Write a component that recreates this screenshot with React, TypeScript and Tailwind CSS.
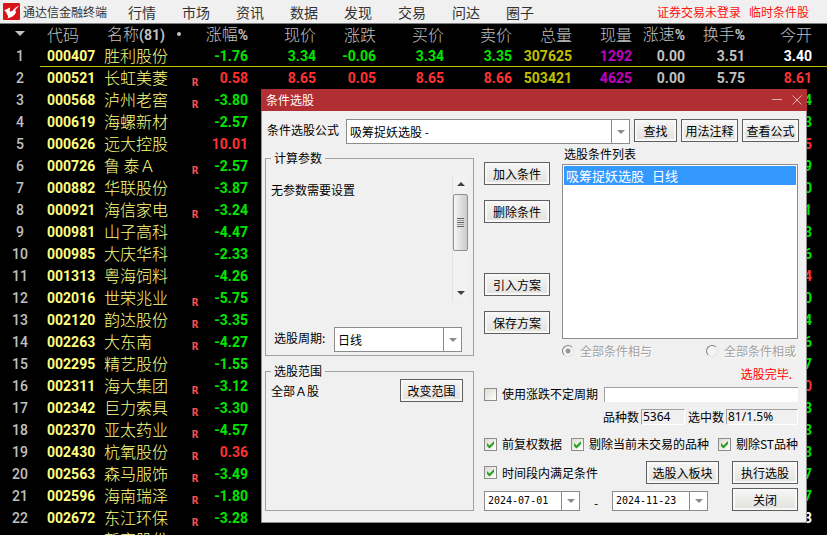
import { useState, type ReactNode } from 'react';
import clsx from 'clsx';

const menus = ['行情', '市场', '资讯', '数据', '发现', '交易', '问达', '圈子'];

type Stock = {
  code: string;
  name: string;
  margin?: boolean;
  change: string;
  quotes?: string[];
  open: string;
  openColor: string;
};

const GREEN = 'text-[#00e600]';
const RED = 'text-[#ff3232]';
const WHITE = 'text-white';

const stocks: Stock[] = [
  { code: '000407', name: '胜利股份', change: '-1.76', quotes: ['3.34', '-0.06', '3.34', '3.35', '307625', '1292', '0.00', '3.51'], open: '3.40', openColor: WHITE },
  { code: '000521', name: '长虹美菱', margin: true, change: '0.58', quotes: ['8.65', '0.05', '8.65', '8.66', '503421', '4625', '0.00', '5.75'], open: '8.61', openColor: RED },
  { code: '000568', name: '泸州老窖', margin: true, change: '-3.80', open: '4', openColor: GREEN },
  { code: '000619', name: '海螺新材', change: '-2.57', open: '3', openColor: GREEN },
  { code: '000626', name: '远大控股', change: '10.01', open: '5', openColor: RED },
  { code: '000726', name: '鲁 泰Ａ', margin: true, change: '-2.57', open: '9', openColor: GREEN },
  { code: '000882', name: '华联股份', change: '-3.87', open: '0', openColor: GREEN },
  { code: '000921', name: '海信家电', margin: true, change: '-3.24', open: '1', openColor: GREEN },
  { code: '000981', name: '山子高科', change: '-4.47', open: '3', openColor: GREEN },
  { code: '000985', name: '大庆华科', change: '-2.33', open: '6', openColor: GREEN },
  { code: '001313', name: '粤海饲料', change: '-4.26', open: '4', openColor: RED },
  { code: '002016', name: '世荣兆业', margin: true, change: '-5.75', open: '0', openColor: GREEN },
  { code: '002120', name: '韵达股份', margin: true, change: '-3.35', open: '4', openColor: GREEN },
  { code: '002263', name: '大东南', margin: true, change: '-4.27', open: '6', openColor: GREEN },
  { code: '002295', name: '精艺股份', change: '-1.55', open: '7', openColor: GREEN },
  { code: '002311', name: '海大集团', margin: true, change: '-3.12', open: '0', openColor: RED },
  { code: '002342', name: '巨力索具', margin: true, change: '-3.30', open: '3', openColor: GREEN },
  { code: '002370', name: '亚太药业', margin: true, change: '-4.57', open: '3', openColor: GREEN },
  { code: '002430', name: '杭氧股份', margin: true, change: '0.36', open: '3', openColor: GREEN },
  { code: '002563', name: '森马服饰', margin: true, change: '-3.49', open: '7', openColor: GREEN },
  { code: '002596', name: '海南瑞泽', margin: true, change: '-1.80', open: '7', openColor: GREEN },
  { code: '002672', name: '东江环保', margin: true, change: '-3.28', open: '3', openColor: WHITE },
  { code: '', name: '新宏股份', change: '', open: '', openColor: WHITE },
];

const headers = ['现价', '涨跌', '买价', '卖价', '总量', '现量', '涨速%', '换手%', '今开'];

const signColor = (value: string) => (value.startsWith('-') ? GREEN : RED);

function quoteColor(col: number, row: Stock) {
  if (col === 4) return 'text-[#c0c000]';
  if (col === 5) return 'text-[#c000c0]';
  if (col > 5) return 'text-[#c0c0c0]';
  return signColor(row.change);
}

function HeaderText({ text }: { text: string }) {
  return text.endsWith('%') ? (
    <>
      {text.slice(0, -1)}
      <b className="font-[Roboto,sans-serif] text-sm leading-4 font-bold">%</b>
    </>
  ) : (
    <>{text}</>
  );
}

function Logo() {
  return (
    <svg viewBox="0 0 17 17" className="w-[17px] h-[17px] shrink-0" aria-hidden="true">
      <rect width="17" height="17" rx="1" fill="#d8141a" />
      <path d="M1 7.500 7 4.500 6.800 8.500 9.500 8C11 5.500 13.500 3.500 16.500 2.800 14.800 4 13.500 5.500 12.300 7.500L13 9.500C11.500 13 8 14.800 3.500 15.600 5.500 14.800 5.500 13.500 4.500 12 3.300 10.500 4 8.500 1 7.500Z" fill="#fff" />
    </svg>
  );
}

function TopBar() {
  return (
    <header className="flex items-center h-6 pl-[3px] pr-[18px] bg-[#f0f0f0] border-b border-[#808080] text-xs leading-4">
      <Logo />
      <h1 className="ml-[3px] text-[#333]">通达信金融终端</h1>
      <nav className="flex gap-[26px] ml-[21px] text-sm leading-5 text-[#333]">
        {menus.map((m) => (
          <a key={m} href="#">{m}</a>
        ))}
      </nav>
      <div className="flex gap-2 ml-auto text-[#ff1010]">
        <a href="#">证券交易未登录</a>
        <a href="#">临时条件股</a>
      </div>
    </header>
  );
}

function StockTable() {
  return (
    <table className="w-full table-fixed border-separate border-spacing-0 text-right whitespace-nowrap">
      <colgroup>
        <col className="w-[40px]" />
        <col className="w-[62px]" />
        <col className="w-[86px]" />
        <col className="w-[14px]" />
        <col className="w-[46px]" />
        <col className="w-[68px]" />
        <col className="w-[60px]" />
        <col className="w-[68px]" />
        <col className="w-[68px]" />
        <col className="w-[60px]" />
        <col className="w-[60px]" />
        <col className="w-[53px]" />
        <col className="w-[60px]" />
        <col className="w-[67px]" />
        <col />
      </colgroup>
      <thead>
        <tr className="h-[21px] text-base leading-4 text-[#c0c0c0] [&>th]:font-light [&>th]:pb-0.5">
          <th>
            <span className="block w-0 h-0 mx-auto border-x-5 border-x-transparent border-t-5 border-t-[#c0c0c0]" />
          </th>
          <th className="text-left pl-[7px]">代码</th>
          <th className="text-left pl-[5px]">
            名称<b className="font-[Roboto,sans-serif] text-sm leading-4 font-bold">(81)</b>
            <span className="inline-block size-1 ml-3 mb-1 rounded-full bg-[#c0c0c0]" />
          </th>
          <th colSpan={2}>
            <HeaderText text="涨幅%" />
          </th>
          {headers.map((h) => (
            <th key={h}>
              <HeaderText text={h} />
            </th>
          ))}
          <th />
        </tr>
      </thead>
      <tbody className="font-[Roboto,'Liberation_Sans',sans-serif] text-sm leading-5 font-bold">
        {stocks.map((s, i) => (
          <tr
            key={s.name}
            className={clsx('h-[22px]', i === 0 && '[&>td:not(:first-child)]:border-b [&>td]:border-[#c0c000]')}
          >
            <td className="text-center font-medium text-[#c0c0c0]">{s.code && i + 1}</td>
            <td className="text-left pl-[7px] text-[#ffff80]">{s.code}</td>
            <td className="text-left align-top pl-0.5 font-['Noto_Sans_CJK_SC',sans-serif] text-base leading-5 font-light text-[#ffff80]">
              {s.name}
            </td>
            <td className="text-center align-bottom font-['DejaVu_Sans_Mono',monospace] text-[11px] leading-3 text-[#ff5050]">
              {s.margin ? 'R' : ''}
            </td>
            <td className={signColor(s.change)}>{s.change}</td>
            {headers.slice(0, -1).map((h, c) => (
              <td key={h} className={quoteColor(c, s)}>{s.quotes?.[c]}</td>
            ))}
            <td className={s.openColor}>{s.open}</td>
            <td />
          </tr>
        ))}
      </tbody>
    </table>
  );
}

function PushButton({ children, className }: { children: ReactNode; className?: string }) {
  return (
    <button
      className={clsx(
        'h-[23px] shrink-0 border border-[#606060] bg-linear-to-b from-[#f6f6f6] to-[#e2e1dc] shadow-[inset_0_0_0_2px_#f8f8f8] text-xs leading-4 whitespace-nowrap',
        className,
      )}
    >
      {children}
    </button>
  );
}

function Arrow() {
  return <span className="w-0 h-0 border-x-4 border-x-transparent border-t-4 border-t-[#8a8a8a]" />;
}

function Dropdown({ id, value, className }: { id: string; value: string; className?: string }) {
  return (
    <div className={clsx('relative flex h-[25px] border border-[#8c8c8c] bg-white', className)}>
      <select id={id} className="w-full pl-[3px] pr-5 appearance-none bg-transparent text-xs leading-4">
        <option>{value}</option>
      </select>
      <span className="absolute inset-y-0 right-0 w-[18px] flex items-center justify-center border-l border-[#8c8c8c] pointer-events-none">
        <Arrow />
      </span>
    </div>
  );
}

function DateBox({ label, value }: { label: string; value: string }) {
  return (
    <div className="flex h-5 w-24 border border-[#8c8c8c] bg-white">
      <input
        aria-label={label}
        defaultValue={value}
        className="flex-1 min-w-0 pl-[3px] font-['DejaVu_Sans_Mono',monospace] text-[10px] leading-4"
      />
      <button aria-label={`选择${label}`} className="w-[18px] flex items-center justify-center border-l border-[#8c8c8c]">
        <Arrow />
      </button>
    </div>
  );
}

function Check({ label, initial = false }: { label: string; initial?: boolean }) {
  const [checked, setChecked] = useState(initial);
  return (
    <label className="flex items-center gap-[5px] whitespace-nowrap">
      <span className="relative flex size-[13px]">
        <input
          type="checkbox"
          checked={checked}
          onChange={(e) => setChecked(e.target.checked)}
          className="size-[13px] appearance-none border border-[#8c8c8c] bg-linear-to-br from-[#dedbd0] to-white"
        />
        {checked && (
          <svg viewBox="0 0 13 13" className="absolute inset-0 pointer-events-none" aria-hidden="true">
            <path d="M3 5V8L5.500 10.500 10 6V3L5.500 7.500Z" fill="#21a121" />
          </svg>
        )}
      </span>
      {label}
    </label>
  );
}

function Radio({ label, checked }: { label: string; checked?: boolean }) {
  return (
    <label className="flex items-center gap-1.5 text-[#a0a0a0] [text-shadow:1px_1px_#fff]">
      <input
        type="radio"
        name="combine"
        disabled
        defaultChecked={checked}
        className="size-3 appearance-none rounded-full border border-t-[#808080] border-l-[#808080] border-r-[#e4e4e4] border-b-[#e4e4e4] bg-[#f4f4f4] checked:bg-[radial-gradient(circle,#999_2px,#f4f4f4_3px)]"
      />
      {label}
    </label>
  );
}

function ScrollBar() {
  return (
    <div className="flex flex-col items-center w-4 h-[125px] border-l border-[#e2e2e2] bg-[#f2f2f2]" aria-hidden="true">
      <span className="w-0 h-0 mt-1.5 mb-2 border-x-4 border-x-transparent border-b-4 border-b-[#404040]" />
      <div className="flex flex-col items-center justify-center gap-px w-[15px] h-[57px] rounded-xs border border-[#909090] bg-linear-to-r from-[#f6f6f6] to-[#cbcbcb]">
        <i className="w-[7px] h-px bg-[#666]" />
        <i className="w-[7px] h-px bg-[#999]" />
        <i className="w-[7px] h-px bg-[#666]" />
        <i className="w-[7px] h-px bg-[#999]" />
        <i className="w-[7px] h-px bg-[#666]" />
      </div>
      <span className="w-0 h-0 mt-auto mb-1.5 border-x-4 border-x-transparent border-t-4 border-t-[#404040]" />
    </div>
  );
}

function ParamColumn() {
  return (
    <div className="flex flex-col gap-[7px] w-[209px] pt-1">
      <fieldset className="h-[206px] border border-[#a0a0a0] px-[5px]">
        <legend className="px-[3px]">计算参数</legend>
        <div className="flex justify-between items-start pt-[10px]">
          <p className="pt-1.5">无参数需要设置</p>
          <ScrollBar />
        </div>
        <div className="flex items-start justify-between mt-[26px] pl-[3px] pr-1.5">
          <label htmlFor="period" className="pt-[3px]">选股周期:</label>
          <Dropdown id="period" value="日线" className="w-32" />
        </div>
      </fieldset>
      <fieldset className="flex-1 border border-[#a0a0a0] px-[5px]">
        <legend className="px-[3px]">选股范围</legend>
        <div className="flex justify-between pr-[5px]">
          <span className="pt-1">全部Ａ股</span>
          <PushButton className="w-[63px]">改变范围</PushButton>
        </div>
      </fieldset>
    </div>
  );
}

function ConditionColumn() {
  return (
    <div className="flex-1 min-w-0">
      <div className="flex gap-3">
        <div className="flex flex-col gap-[15px] w-[66px] pt-4">
          <PushButton>加入条件</PushButton>
          <PushButton>删除条件</PushButton>
          <PushButton className="mt-[35px]">引入方案</PushButton>
          <PushButton>保存方案</PushButton>
        </div>
        <div className="flex-1">
          <h3 className="pl-0.5">选股条件列表</h3>
          <ul className="h-[175px] mt-0.5 p-px border border-[#8c8c8c] bg-white text-[13px] leading-[19px]">
            <li className="flex gap-2 px-0.5 bg-[#3399ff] text-white">
              <span>吸筹捉妖选股</span>
              <span>日线</span>
            </li>
          </ul>
          <div className="flex justify-between mt-1 pr-0.5">
            <Radio label="全部条件相与" checked />
            <Radio label="全部条件相或" />
          </div>
        </div>
      </div>
      <p className="mt-[7px] pr-1.5 text-right text-[#ff0000]">选股完毕.</p>
      <div className="flex items-center gap-1.5 mt-1">
        <Check label="使用涨跌不定周期" />
        <input
          aria-label="不定周期"
          className="flex-1 min-w-0 h-[15px] border-t border-l border-[#a0a0a0] bg-white"
        />
      </div>
      <div className="flex justify-end mt-[7px]">
        <span>品种数</span>
        <output className="w-11 ml-0.5 pl-px border border-t-[#a0a0a0] border-l-[#a0a0a0] border-white font-['Noto_Sans',sans-serif] leading-[14px]">
          5364
        </output>
        <span className="ml-[3px]">选中数</span>
        <output className="w-[72px] ml-0.5 pl-px border border-t-[#a0a0a0] border-l-[#a0a0a0] border-white font-['Noto_Sans',sans-serif] leading-[14px]">
          81/1.5%
        </output>
      </div>
      <div className="flex justify-between mt-[11px]">
        <Check label="前复权数据" initial />
        <Check label="剔除当前未交易的品种" initial />
        <Check label="剔除ST品种" initial />
      </div>
      <div className="flex items-center mt-[9px]">
        <Check label="时间段内满足条件" initial />
        <PushButton className="w-[73px] ml-auto mr-[13px]">选股入板块</PushButton>
        <PushButton className="w-[66px]">执行选股</PushButton>
      </div>
      <div className="flex items-end mt-1">
        <DateBox label="开始日期" value="2024-07-01" />
        <span className="w-8 text-center">-</span>
        <DateBox label="结束日期" value="2024-11-23" />
        <PushButton className="w-[66px] ml-auto">关闭</PushButton>
      </div>
    </div>
  );
}

function ConditionDialog() {
  return (
    <section
      role="dialog"
      aria-labelledby="dialog-title"
      className="absolute left-[261px] top-[89px] w-[546px] text-xs leading-4 text-black"
    >
      <div className="flex items-center h-[22px] px-[5px] bg-[#b12e32] text-white">
        <h2 id="dialog-title">条件选股</h2>
        <button aria-label="最小化" className="ml-auto mr-2.5">
          <svg viewBox="0 0 10 10" className="size-2.5" stroke="#e3b3b4" aria-hidden="true">
            <path d="M0 4.500H10" />
          </svg>
        </button>
        <button aria-label="关闭窗口">
          <svg viewBox="0 0 10 10" className="size-2.5" stroke="#e3b3b4" aria-hidden="true">
            <path d="M.5.500 9.500 9.500M9.500.500.500 9.500" />
          </svg>
        </button>
      </div>
      <div className="pt-2 pl-[3px] pr-[7px] pb-[11px] border border-t-0 border-[#909090] bg-[#f0f0f0]">
        <div className="flex items-start pl-0.5">
          <label htmlFor="formula" className="pt-[3px]">条件选股公式</label>
          <Dropdown id="formula" value="吸筹捉妖选股 -" className="flex-1 ml-[7px] mr-1" />
          <div className="flex gap-1">
            <PushButton className="w-[43px]">查找</PushButton>
            <PushButton className="w-[57px]">用法注释</PushButton>
            <PushButton className="w-[57px]">查看公式</PushButton>
          </div>
        </div>
        <div className="flex gap-[10px] mt-0.5 pr-px">
          <ParamColumn />
          <ConditionColumn />
        </div>
      </div>
    </section>
  );
}

export default function App() {
  return (
    <main className="relative h-screen overflow-hidden bg-black font-['Noto_Sans_CJK_SC','Noto_Sans',sans-serif]">
      <TopBar />
      <StockTable />
      <ConditionDialog />
    </main>
  );
}
